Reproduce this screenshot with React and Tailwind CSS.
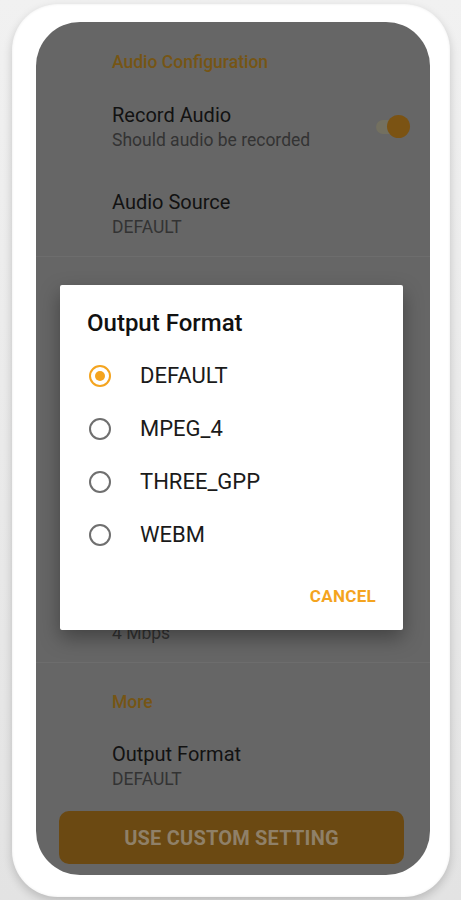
import React from 'react';

const options = ['DEFAULT', 'MPEG_4', 'THREE_GPP', 'WEBM'];

const Pref = ({ title, summary, right, className = '' }) => (
    <div className={`flex items-center pl-[76px] pr-[20px] ${className}`}>
        <div className="flex-1">
            <div className="text-[20px] leading-[24px] text-[#121212]">{title}</div>
            <div className="mt-[3px] text-[17.5px] leading-[20px] text-[#333333]">{summary}</div>
        </div>
        {right}
    </div>
);

const Radio = ({ checked }) => (
    <div className={`w-[22px] h-[22px] rounded-full border-2 flex items-center justify-center ${checked ? 'border-[#f4a41f]' : 'border-[#6f6f6f]'}`}>
        {checked && <div className="w-[10px] h-[10px] rounded-full bg-[#f4a41f]" />}
    </div>
);

export default function App() {
    return (
        <div className="w-[461px] h-[900px] bg-gradient-to-b from-[#f1f1f1] to-[#e3e3e3] pl-[12px] pt-[4px]" style={{ fontFamily: 'Roboto, "Noto Sans", sans-serif' }}>
            <div className="w-[438px] h-[893px] bg-white rounded-[46px] shadow-[0_4px_10px_rgba(0,0,0,0.18),inset_0_0_3px_rgba(0,0,0,0.08)] pl-[24px] pt-[18px]">
                <div className="relative w-[394px] h-[853px] bg-[#666666] rounded-[44px] overflow-hidden flex flex-col">
                    {/* Audio section */}
                    <div className="pl-[76px] pt-[30px] text-[17.5px] leading-[20px] font-medium text-[#765514]">Audio Configuration</div>
                    <Pref
                        className="mt-[31px]"
                        title="Record Audio"
                        summary="Should audio be recorded"
                        right={
                            <div className="relative w-[34px] h-[22px] flex items-center">
                                <div className="w-[32px] h-[14px] rounded-full bg-[#737060]" />
                                <div className="absolute right-0 w-[23px] h-[23px] rounded-full bg-[#7b5313]" />
                            </div>
                        }
                    />
                    <Pref className="mt-[40px]" title="Audio Source" summary="DEFAULT" />
                    <div className="mt-[19px] h-px bg-[#6d6d6d]" />

                    {/* Video section, behind the dialog */}
                    <div className="h-[386px] flex flex-col justify-end">
                        <div className="flex pl-[76px]">
                            <div className="mt-[27px] text-[17.5px] leading-[20px] text-[#333333]">4 Mbps</div>
                        </div>
                    </div>
                    <div className="mt-[19px] h-px bg-[#6d6d6d]" />

                    {/* More */}
                    <div className="pl-[76px] mt-[29px] text-[17.5px] leading-[20px] font-medium text-[#765514]">More</div>
                    <Pref className="mt-[30px]" title="Output Format" summary="DEFAULT" />
                    <button className="mt-[22px] ml-[23px] w-[345px] h-[53px] rounded-[10px] bg-[#6b4912] text-[#8f8068] text-[20px] font-bold tracking-[0.2px]">
                        USE CUSTOM SETTING
                    </button>

                    {/* Dialog */}
                    <div className="absolute left-[24px] top-[263px] w-[343px] h-[345px] bg-white rounded-[2px] shadow-[0_8px_20px_rgba(0,0,0,0.35)] flex flex-col">
                        <div className="pl-[27px] pt-[24px] text-[24px] leading-[28px] font-medium text-[#111111]">Output Format</div>
                        <div className="mt-[12px] flex flex-col">
                            {options.map((o, i) => (
                                <div key={o} className="h-[53px] flex items-center pl-[29px]">
                                    <Radio checked={i === 0} />
                                    <span className="ml-[29px] text-[22px] text-[#1a1a1a]">{o}</span>
                                </div>
                            ))}
                        </div>
                        <div className="flex-1 flex items-end justify-end pr-[27px] pb-[24px]">
                            <span className="text-[17px] leading-[20px] font-bold text-[#f4a41f] tracking-[0.3px]">CANCEL</span>
                        </div>
                    </div>
                </div>
            </div>
        </div>
    );
}
